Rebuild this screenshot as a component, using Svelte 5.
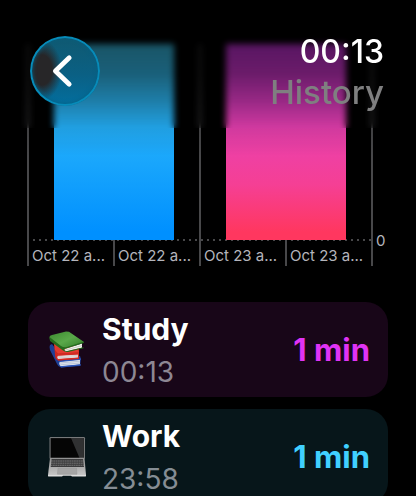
<script>
  const days = [
    { tone: 'blue', ticks: ['Oct 22 a...', 'Oct 22 a...'] },
    { tone: 'pink', ticks: ['Oct 23 a...', 'Oct 23 a...'] }
  ];
  const sessions = [
    { name: 'Study', time: '00:13', length: '1 min', tone: 'purple', icon: 'books' },
    { name: 'Work', time: '23:58', length: '1 min', tone: 'cyan', icon: 'laptop' }
  ];
</script>

<div class="screen">
  <header>
    <button class="back" aria-label="Back">
      <svg width="70" height="70" viewBox="0 0 70 70" fill="none" aria-hidden="true">
        <path d="M39.2 21.8 L25.4 35 L39.2 48.2" stroke="#fff" stroke-width="4.8" stroke-linecap="round" stroke-linejoin="round" />
      </svg>
    </button>
    <div class="heading">
      <time>00:13</time>
      <h1>History</h1>
    </div>
  </header>

  <main>
    <section class="chart" aria-label="Time per day">
      <div class="days">
        {#each days as day}
          <div class="day">
            <div class="plot"><div class="bar {day.tone}"></div></div>
            <div class="ticks">
              {#each day.ticks as tick}
                <span>{tick}</span>
              {/each}
            </div>
          </div>
        {/each}
      </div>
      <span class="zero">0</span>
    </section>

    <ul>
      {#each sessions as s}
        <li class={s.tone}>
          {#if s.icon === 'books'}
            <svg class="icon" width="40" height="40" viewBox="0 0 40 40" aria-hidden="true">
              <defs>
                <linearGradient id="green" x1="0" y1="0" x2="1" y2="1">
                  <stop offset="0" stop-color="#3c8b2f" />
                  <stop offset=".5" stop-color="#5aa84a" />
                  <stop offset="1" stop-color="#2e7a24" />
                </linearGradient>
              </defs>
              <g transform="translate(0 -1)">
                <path d="M3 16 L5 15 L15 28 L33 27 L34 30 L33 37 L14 38.5 Q11 38 10 35 L3 21 Q2 18 3 16Z" fill="#1d3f96" />
                <path d="M13 32.5 L33 30.5 V35.5 L14 37.5 Q11 35 13 32.5Z" fill="#dfe5ee" />
                <path d="M13 34 L33 32.2 M13.3 35.8 L33 34" stroke="#9aa8c0" stroke-width=".5" />
                <path d="M12 32 L34 29.5 V30.7 L13 33Z M13 37.3 L34 35.3 V36.4 L14 38.6Z" fill="#2b55b8" />
                <path d="M7 13.5 L32 18.5 L32 30 L11 31.5 Q8 30 8 26Z" fill="#c92720" />
                <path d="M7 13.5 L15 19 L31 20 L32 23.5 L11 24.5 L8 21Z" fill="#e23b30" />
                <path d="M11 26.5 L31 25.3 V28.8 L11 30.2 Q9.5 28 11 26.5Z" fill="#f0eceb" />
                <path d="M11 27.5 L31 26.4 M11 28.9 L31 27.7" stroke="#bba9a8" stroke-width=".5" />
                <path d="M10 25 L32 23.3 V25.4 L11 26.8Z M10.5 30 L32 28.5 V29.8 L11 31.5Z" fill="#d42a22" />
                <path d="M2.5 8 Q2.5 6.5 5 6 L19 2.5 L22 2.7 L37 13 L36 14 L19 19.5 L16 19 L3 11Z" fill="url(#green)" />
                <path d="M18 20 L35 14.5 V18.8 L19 22.6 Q16.5 21.5 18 20Z" fill="#f3f3ee" />
                <path d="M18 21.2 L35 16.6" stroke="#b3b7ad" stroke-width=".6" />
                <path d="M2.5 8 L3 12 L16 21.5 Q18 23.3 21 22.9 L36.5 19.3 V18.3 L20 22 Q17 22 17.4 20 L36.6 14 V12.8 L19 18.3 Q16 18.5 14 17Z" fill="#256a1d" />
              </g>
            </svg>
          {:else}
            <svg class="icon" width="40" height="40" viewBox="0 0 40 40" aria-hidden="true">
              <defs>
                <linearGradient id="metal" x1="0" y1="0" x2="0" y2="1">
                  <stop offset="0" stop-color="#909090" />
                  <stop offset="1" stop-color="#c6c6c6" />
                </linearGradient>
              </defs>
              <rect x="2.5" y="0" width="35.5" height="22" rx="1.3" fill="#77797a" />
              <rect x="3.6" y="1.1" width="33.3" height="20" fill="#050505" />
              <path d="M24 1.1 H36.9 V21 H32.5Z" fill="#303132" />
              <path d="M3 20.8 H37.5 L39 38 H1Z" fill="url(#metal)" />
              <path d="M4.6 22 H36 L37 30 H3.7Z" fill="#3b3b3c" />
              <path d="M4 24 H36.5 M4 26.2 H36.5 M3.7 28.3 H37" stroke="#999" stroke-width=".6" stroke-dasharray="1.8 .5" />
              <path d="M11 31 H29.5 L30 37.2 H10.4Z" fill="#a5a5a5" stroke="#929292" stroke-width=".4" />
              <path d="M1 38 H39 V39 Q39 39.6 37.5 39.6 H25 L24 38.8 H16 L15 39.6 H2.5 Q1 39.6 1 39Z" fill="#dedede" />
            </svg>
          {/if}
          <div class="info">
            <strong>{s.name}</strong>
            <span>{s.time}</span>
          </div>
          <b>{s.length}</b>
        </li>
      {/each}
    </ul>
  </main>
</div>

<style>
  :global(body) {
    margin: 0;
    background: #000;
  }
  .screen {
    position: relative;
    height: 100vh;
    overflow: hidden;
    background: #000;
    color: #fff;
    font-family: Inter, 'Liberation Sans', sans-serif;
  }
  header {
    position: absolute;
    z-index: 2;
    inset: 0 0 auto;
    box-sizing: border-box;
    height: 128px;
    padding: 36px 32px 0 30px;
    display: flex;
    justify-content: space-between;
    align-items: flex-start;
  }
  header::before,
  header::after {
    content: '';
    position: absolute;
    z-index: -1;
    inset: 0;
  }
  header::before {
    backdrop-filter: blur(3px);
  }
  header::after {
    bottom: -28px;
    background: linear-gradient(rgba(0, 0, 0, 0.6) 44px, rgba(0, 0, 0, 0.52) 74px, rgba(0, 0, 0, 0.34) 100px, rgba(0, 0, 0, 0.1) 128px, rgba(0, 0, 0, 0) 156px);
  }
  .back {
    width: 70px;
    height: 70px;
    padding: 0;
    border: 0;
    border-radius: 50%;
    background:
      radial-gradient(ellipse 20px 30px at 12px 34px, #272628 50%, rgba(39, 38, 40, 0) 100%),
      linear-gradient(#105970, #0a6084 55%, #036f9f);
    box-shadow: inset 0 0 0 2px #078bb9, inset 0 0 4px 2px #075f80;
  }
  .back svg {
    display: block;
  }
  .heading {
    text-align: right;
    font-size: 32px;
    line-height: 40px;
    font-weight: 500;
  }
  time {
    display: block;
    margin-top: -4px;
  }
  h1 {
    margin: 0;
    font: inherit;
    font-size: 33px;
    color: #7f7f80;
  }
  main {
    padding: 44px 28px 0;
  }
  .chart {
    display: flex;
    font-size: 15px;
    line-height: 20px;
    color: #b4b5bc;
  }
  .days {
    position: relative;
    z-index: 0;
    flex: 1;
    display: flex;
    margin-left: -1px;
    border-right: 2px solid #48484a;
  }
  .days::after {
    content: '';
    position: absolute;
    z-index: -1;
    inset: 195px 0 auto;
    height: 2px;
    background: repeating-linear-gradient(90deg, #48484a 0 2px, transparent 2px 6px);
  }
  .day {
    flex: 1;
    min-width: 0;
    box-sizing: border-box;
    border-left: 2px solid #48484a;
  }
  .plot {
    height: 196px;
    display: flex;
    justify-content: center;
  }
  .bar {
    width: 120px;
    max-width: 90%;
  }
  .blue {
    background: linear-gradient(#40d4ff, #20acfb 50%, #0090ff 96%);
  }
  .pink {
    background: linear-gradient(#dc37f5, #ea41ae 45%, #f53f94 72%, #ff375f 96%);
  }
  .ticks {
    display: flex;
    height: 26px;
  }
  .ticks span {
    flex: 1;
    min-width: 0;
    box-sizing: border-box;
    padding: 6px 0 0 3px;
    white-space: nowrap;
  }
  .ticks span + span {
    border-left: 2px solid #48484a;
  }
  .zero {
    align-self: flex-end;
    width: 12px;
    margin: 0 0 15px 3px;
  }
  ul {
    list-style: none;
    margin: 36px 0 0;
    padding: 0;
    display: grid;
    gap: 12px;
  }
  li {
    display: flex;
    align-items: center;
    box-sizing: border-box;
    min-height: 95px;
    padding: 4px 18px 4px 19px;
    border-radius: 22px;
  }
  .purple {
    background: #180618;
  }
  .cyan {
    background: #07161a;
  }
  .icon {
    flex: none;
    margin-right: 15px;
  }
  .info {
    flex: 1;
    display: grid;
  }
  strong {
    font-size: 30px;
    line-height: 44px;
    font-weight: 700;
  }
  .info span {
    font-size: 28px;
    line-height: 42px;
    color: #8d8793;
  }
  .cyan .info span {
    color: #858d94;
  }
  b {
    font-size: 31px;
    line-height: 40px;
    font-weight: 700;
    color: #e033f5;
  }
  .cyan b {
    color: #40d0ff;
  }
</style>
